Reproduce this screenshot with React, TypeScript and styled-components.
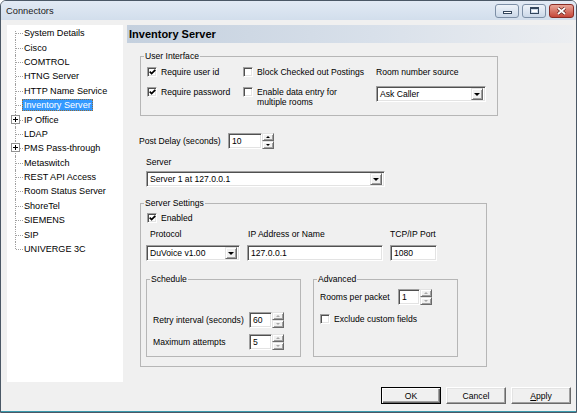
import React from "react";
import styled, { createGlobalStyle, css } from "styled-components";

type TreeItem = { label: string; expandable?: boolean; selected?: boolean };

const TREE: TreeItem[] = [
  { label: "System Details" },
  { label: "Cisco" },
  { label: "COMTROL" },
  { label: "HTNG Server" },
  { label: "HTTP Name Service" },
  { label: "Inventory Server", selected: true },
  { label: "IP Office", expandable: true },
  { label: "LDAP" },
  { label: "PMS Pass-through", expandable: true },
  { label: "Metaswitch" },
  { label: "REST API Access" },
  { label: "Room Status Server" },
  { label: "ShoreTel" },
  { label: "SIEMENS" },
  { label: "SIP" },
  { label: "UNIVERGE 3C" },
];

const Check: React.FC<{ checked?: boolean }> = ({ checked }) => (
  <CheckBox>
    {checked && (
      <svg width="7" height="6" viewBox="0 0 7 6">
        <path d="M0.7 2.6 L2.6 4.6 L6.3 0.8" fill="none" stroke="#000" strokeWidth="1.7" />
      </svg>
    )}
  </CheckBox>
);

const CheckItem: React.FC<{ checked?: boolean; children: React.ReactNode }> = ({
  checked,
  children,
}) => (
  <CheckRow>
    <Check checked={checked} />
    <CheckText>{children}</CheckText>
  </CheckRow>
);

const Select: React.FC<{ value: string; width: number }> = ({ value, width }) => (
  <SelectBox $width={width}>
    <FieldValue>{value}</FieldValue>
    <DropButton>
      <DownTriangle />
    </DropButton>
  </SelectBox>
);

const Spinner: React.FC<{ value: string; width: number; dim?: boolean }> = ({
  value,
  width,
  dim,
}) => (
  <SpinBox $width={width}>
    <SpinField>
      <FieldValue>{value}</FieldValue>
    </SpinField>
    <SpinButtons>
      <SpinButton>
        <SpinArrow $up $dim={dim} />
      </SpinButton>
      <SpinButton>
        <SpinArrow $dim={dim} />
      </SpinButton>
    </SpinButtons>
  </SpinBox>
);

export default function App() {
  return (
    <>
      <GlobalStyle />
      <Window>
        <TitleBar>
          <Title>Connectors</Title>
          <CaptionButtons>
            <CaptionButton>
              <MinGlyph />
            </CaptionButton>
            <CaptionButton>
              <MaxGlyph />
            </CaptionButton>
            <CloseButton>
              <svg width="11" height="8" viewBox="0 0 11 8">
                <path d="M2 1 L9 7 M9 1 L2 7" stroke="#5b1e18" strokeWidth="3.2" />
                <path d="M2 1 L9 7 M9 1 L2 7" stroke="#fff" strokeWidth="1.8" />
              </svg>
            </CloseButton>
          </CaptionButtons>
        </TitleBar>

        <Body>
          <Main>
            <Tree>
              {TREE.map((item, i) => (
                <TreeRow key={item.label}>
                  <Connector $first={i === 0} $last={i === TREE.length - 1}>
                    {item.expandable && <Expander />}
                  </Connector>
                  <TreeLabel $selected={item.selected}>{item.label}</TreeLabel>
                </TreeRow>
              ))}
            </Tree>

            <Panel>
              <PanelHeader>Inventory Server</PanelHeader>
              <PanelBody>
                <UserGroup>
                  <Legend>User Interface</Legend>
                  <UserGrid>
                    <CheckItem checked>Require user id</CheckItem>
                    <CheckItem>Block Checked out Postings</CheckItem>
                    <Label>Room number source</Label>
                    <CheckItem checked>Require password</CheckItem>
                    <CheckItem>
                      Enable data entry for
                      <br />
                      multiple rooms
                    </CheckItem>
                    <RoomSource>
                      <Select value="Ask Caller" width={110} />
                    </RoomSource>
                  </UserGrid>
                </UserGroup>

                <PostDelayRow>
                  <PostDelayLabel>Post Delay (seconds)</PostDelayLabel>
                  <Spinner value="10" width={46} />
                </PostDelayRow>

                <ServerLabel>Server</ServerLabel>
                <ServerSelect>
                  <Select value="Server 1 at 127.0.0.1" width={239} />
                </ServerSelect>

                <SettingsGroup>
                  <Legend>Server Settings</Legend>
                  <CheckItem checked>Enabled</CheckItem>
                  <ConnectionGrid>
                    <GridLabel $shift={4}>Protocol</GridLabel>
                    <GridLabel $shift={1}>IP Address or Name</GridLabel>
                    <GridLabel $shift={0}>TCP/IP Port</GridLabel>
                    <Select value="DuVoice v1.00" width={94} />
                    <TextField>
                      <FieldValue>127.0.0.1</FieldValue>
                    </TextField>
                    <TextField>
                      <FieldValue>1080</FieldValue>
                    </TextField>
                  </ConnectionGrid>

                  <SubGroups>
                    <ScheduleGroup>
                      <Legend>Schedule</Legend>
                      <SpinRows>
                        <SpinRow>
                          <ScheduleLabel>Retry interval (seconds)</ScheduleLabel>
                          <Spinner value="60" width={35} dim />
                        </SpinRow>
                        <SpinRow>
                          <ScheduleLabel>Maximum attempts</ScheduleLabel>
                          <Spinner value="5" width={35} dim />
                        </SpinRow>
                      </SpinRows>
                    </ScheduleGroup>

                    <AdvancedGroup>
                      <Legend>Advanced</Legend>
                      <SpinRow>
                        <AdvancedLabel>Rooms per packet</AdvancedLabel>
                        <Spinner value="1" width={34} dim />
                      </SpinRow>
                      <ExcludeRow>
                        <CheckItem>Exclude custom fields</CheckItem>
                      </ExcludeRow>
                    </AdvancedGroup>
                  </SubGroups>
                </SettingsGroup>
              </PanelBody>
            </Panel>
          </Main>

          <Footer>
            <DialogButton $primary>OK</DialogButton>
            <DialogButton>Cancel</DialogButton>
            <DialogButton>
              <u>A</u>pply
            </DialogButton>
          </Footer>
        </Body>
      </Window>
    </>
  );
}

// Styled Components
const GlobalStyle = createGlobalStyle`
  html, body {
    margin: 0;
    padding: 0;
    background: #ffffff;
  }
  body {
    font-family: "Liberation Sans", Arial, sans-serif;
    color: #000;
  }
`;

const sunken = css`
  box-sizing: border-box;
  background: #fff;
  border: 1px solid;
  border-color: #a0a0a0 #fff #fff #a0a0a0;
  box-shadow: inset 1px 1px 0 #505050, inset -1px -1px 0 #e3e3e3;
`;

const raised = css`
  box-sizing: border-box;
  background: #f0f0f0;
  border: 1px solid;
  border-color: #e3e3e3 #6a6a6a #6a6a6a #e3e3e3;
  box-shadow: inset 1px 1px 0 #fff, inset -1px -1px 0 #a0a0a0;
`;

const Window = styled.div`
  width: 577px;
  height: 413px;
  box-sizing: border-box;
  border: 1px solid #4b5866;
  border-radius: 6px 6px 0 0;
  background: #f0f0f0;
  display: flex;
  flex-direction: column;
  overflow: hidden;
  font-family: "Liberation Sans", Arial, sans-serif;
`;

const TitleBar = styled.div`
  height: 19px;
  flex: 0 0 19px;
  display: flex;
  align-items: center;
  justify-content: space-between;
  padding: 0 2px 0 5px;
  background: linear-gradient(#e2eaf4, #d2deec);
`;

const Title = styled.span`
  font-size: 9.3px;
  color: #1b1b1b;
`;

const CaptionButtons = styled.div`
  display: flex;
  align-items: center;
  gap: 2px;
`;

const CaptionButton = styled.span`
  width: 24px;
  height: 14px;
  box-sizing: border-box;
  border: 1px solid #7d8fa6;
  border-radius: 3px;
  background: linear-gradient(#eef3f9, #cbd8e8);
  display: flex;
  align-items: center;
  justify-content: center;
  margin-right: 1px;
`;

const CloseButton = styled(CaptionButton)`
  width: 25px;
  border-color: #8a2c24;
  background: linear-gradient(#e8a597, #c6473a);
  margin-right: 0;
`;

const MinGlyph = styled.span`
  width: 9px;
  height: 3px;
  box-sizing: border-box;
  border: 1px solid #34465c;
  background: #fff;
  margin-top: 4px;
`;

const MaxGlyph = styled.span`
  width: 9px;
  height: 7px;
  box-sizing: border-box;
  border: 1px solid #34465c;
  border-top-width: 2px;
  background: #fff;
  box-shadow: inset 0 0 0 1px #cfdbe9;
`;

const Body = styled.div`
  flex: 1;
  display: flex;
  flex-direction: column;
  padding: 5px 5px 7px 6px;
  border-bottom: 1px solid #3a9aac;
`;

const Main = styled.div`
  height: 357px;
  display: flex;
  gap: 4px;
`;

const Tree = styled.div`
  width: 116px;
  flex: 0 0 116px;
  background: #fff;
  padding-top: 1px;
  box-sizing: border-box;
`;

const TreeRow = styled.div`
  height: 14.4px;
  display: flex;
  align-items: center;
`;

const Connector = styled.span<{ $first?: boolean; $last?: boolean }>`
  position: relative;
  flex: 0 0 17px;
  align-self: stretch;

  &::before {
    content: "";
    position: absolute;
    left: 8px;
    top: ${({ $first }) => ($first ? "35%" : "0")};
    bottom: ${({ $last }) => ($last ? "50%" : "0")};
    border-left: 1px dotted #a0a0a0;
  }

  &::after {
    content: "";
    position: absolute;
    left: 9px;
    width: 7px;
    top: 50%;
    border-top: 1px dotted #a0a0a0;
  }
`;

const Expander = styled.span`
  position: absolute;
  left: 4px;
  top: 50%;
  margin-top: -5px;
  width: 9px;
  height: 9px;
  box-sizing: border-box;
  border: 1px solid #919191;
  background: #fff;
  z-index: 1;

  &::before {
    content: "";
    position: absolute;
    left: 1px;
    right: 1px;
    top: 3px;
    height: 1px;
    background: #000;
  }

  &::after {
    content: "";
    position: absolute;
    top: 1px;
    bottom: 1px;
    left: 3px;
    width: 1px;
    background: #000;
  }
`;

const TreeLabel = styled.span<{ $selected?: boolean }>`
  margin-left: -2px;
  padding: 0 2px;
  font-size: 9.1px;
  line-height: 12px;
  white-space: nowrap;
  color: #000;
  ${({ $selected }) =>
    $selected &&
    css`
      background: #3399ff;
      color: #fff;
      outline: 1px dotted #8f6b3a;
      outline-offset: -1px;
    `}
`;

const Panel = styled.div`
  flex: 1;
  min-width: 0;
  display: flex;
  flex-direction: column;
`;

const PanelHeader = styled.div`
  height: 18px;
  margin-right: -2px;
  padding-left: 2px;
  font-size: 11px;
  font-weight: bold;
  line-height: 18px;
  background: linear-gradient(90deg, #c4d0de 0%, #d8e0ea 55%, #eceef1 100%);
`;

const PanelBody = styled.div`
  display: flex;
  flex-direction: column;
  align-items: flex-start;
  padding-left: 13px;
  font-size: 8.6px;
`;

const Group = styled.fieldset`
  margin: 0;
  min-width: 0;
  box-sizing: border-box;
  border: 1px solid #b6b6b6;
  padding: 0 6px;
`;

const Legend = styled.legend`
  margin-left: -3px;
  padding: 0 1px;
  font-size: 8.6px;
  line-height: 10px;
  white-space: nowrap;
`;

const UserGroup = styled(Group)`
  margin-top: 8px;
  width: 358px;
  padding-top: 6px;
  padding-bottom: 8px;
`;

const UserGrid = styled.div`
  display: grid;
  grid-template-columns: 96px 133px 110px;
  row-gap: 10px;
  align-items: start;
`;

const RoomSource = styled.div`
  margin-top: -1px;
`;

const Label = styled.span`
  font-size: 8.6px;
  line-height: 10px;
  white-space: nowrap;
`;

const CheckRow = styled.div`
  display: flex;
  align-items: flex-start;
  gap: 4px;
`;

const CheckBox = styled.span`
  ${sunken};
  width: 10px;
  height: 10px;
  flex: 0 0 10px;
  display: flex;
  align-items: center;
  justify-content: center;
`;

const CheckText = styled.span`
  font-size: 8.6px;
  line-height: 10px;
  white-space: nowrap;
`;

const FieldValue = styled.span`
  flex: 1;
  padding-left: 1px;
  font-size: 8.6px;
  line-height: 12px;
  white-space: nowrap;
  overflow: hidden;
`;

const SelectBox = styled.div<{ $width: number }>`
  ${sunken};
  width: ${({ $width }) => $width}px;
  height: 16px;
  padding: 2px;
  display: flex;
  align-items: center;
`;

const DropButton = styled.span`
  ${raised};
  width: 12px;
  height: 12px;
  flex: 0 0 12px;
  display: flex;
  align-items: center;
  justify-content: center;
`;

const DownTriangle = styled.span`
  width: 0;
  height: 0;
  border-left: 3px solid transparent;
  border-right: 3px solid transparent;
  border-top: 3px solid #000;
`;

const TextField = styled.div`
  ${sunken};
  height: 16px;
  padding: 2px;
  display: flex;
  align-items: center;
`;

const SpinBox = styled.div<{ $width: number }>`
  width: ${({ $width }) => $width}px;
  height: 16px;
  display: flex;
`;

const SpinField = styled.div`
  ${sunken};
  flex: 1;
  padding: 2px;
  display: flex;
  align-items: center;
`;

const SpinButtons = styled.div`
  width: 12px;
  flex: 0 0 12px;
  display: flex;
  flex-direction: column;
`;

const SpinButton = styled.span`
  ${raised};
  flex: 1;
  display: flex;
  align-items: center;
  justify-content: center;
`;

const SpinArrow = styled.span<{ $up?: boolean; $dim?: boolean }>`
  width: 0;
  height: 0;
  border-left: 2px solid transparent;
  border-right: 2px solid transparent;
  ${({ $up, $dim }) =>
    $up
      ? `border-bottom: 2px solid ${$dim ? "#a8a8a8" : "#000"};`
      : `border-top: 2px solid ${$dim ? "#a8a8a8" : "#000"};`}
`;

const PostDelayRow = styled.div`
  margin-top: 17px;
  display: flex;
  align-items: center;
`;

const PostDelayLabel = styled(Label)`
  width: 88px;
  margin-left: -1px;
  padding-right: 1px;
`;

const ServerLabel = styled(Label)`
  margin: 8px 0 0 6px;
`;

const ServerSelect = styled.div`
  margin: 4px 0 0 6px;
`;

const SettingsGroup = styled(Group)`
  margin-top: 11px;
  width: 347px;
  padding-top: 5px;
  padding-bottom: 9px;
`;

const ConnectionGrid = styled.div`
  margin: 6px 0 0 -1px;
  display: grid;
  grid-template-columns: 94px 136px 47px;
  column-gap: 7px;
  row-gap: 6px;
`;

const GridLabel = styled(Label)<{ $shift: number }>`
  padding-left: ${({ $shift }) => $shift}px;
`;

const SubGroups = styled.div`
  margin: 13px 0 0 -1px;
  display: flex;
  gap: 12px;
  align-items: stretch;
`;

const ScheduleGroup = styled(Group)`
  width: 155px;
  padding-top: 28px;
  padding-bottom: 6px;
`;

const AdvancedGroup = styled(Group)`
  width: 145px;
  padding-top: 5px;
`;

const SpinRows = styled.div`
  display: flex;
  flex-direction: column;
  gap: 6px;
`;

const SpinRow = styled.div`
  display: flex;
  align-items: center;
`;

const ScheduleLabel = styled(Label)`
  width: 96px;
`;

const AdvancedLabel = styled(Label)`
  width: 78px;
`;

const ExcludeRow = styled.div`
  margin-top: 9px;
`;

const Footer = styled.div`
  margin-top: 5px;
  display: flex;
  justify-content: flex-end;
  gap: 5px;
`;

const DialogButton = styled.button<{ $primary?: boolean }>`
  width: 60px;
  height: 17px;
  padding: 0;
  font-family: "Liberation Sans", Arial, sans-serif;
  font-size: 8.6px;
  color: #000;
  background: #f0f0f0;
  box-sizing: border-box;
  border: 1px solid;
  ${({ $primary }) =>
    $primary
      ? css`
          border-color: #000;
          box-shadow: inset 1px 1px 0 #fff, inset -1px -1px 0 #6a6a6a,
            inset -2px -2px 0 #a0a0a0;
        `
      : css`
          border-color: #fff #6a6a6a #6a6a6a #fff;
          box-shadow: inset -1px -1px 0 #a0a0a0, inset 1px 1px 0 #e3e3e3;
        `}
`;
